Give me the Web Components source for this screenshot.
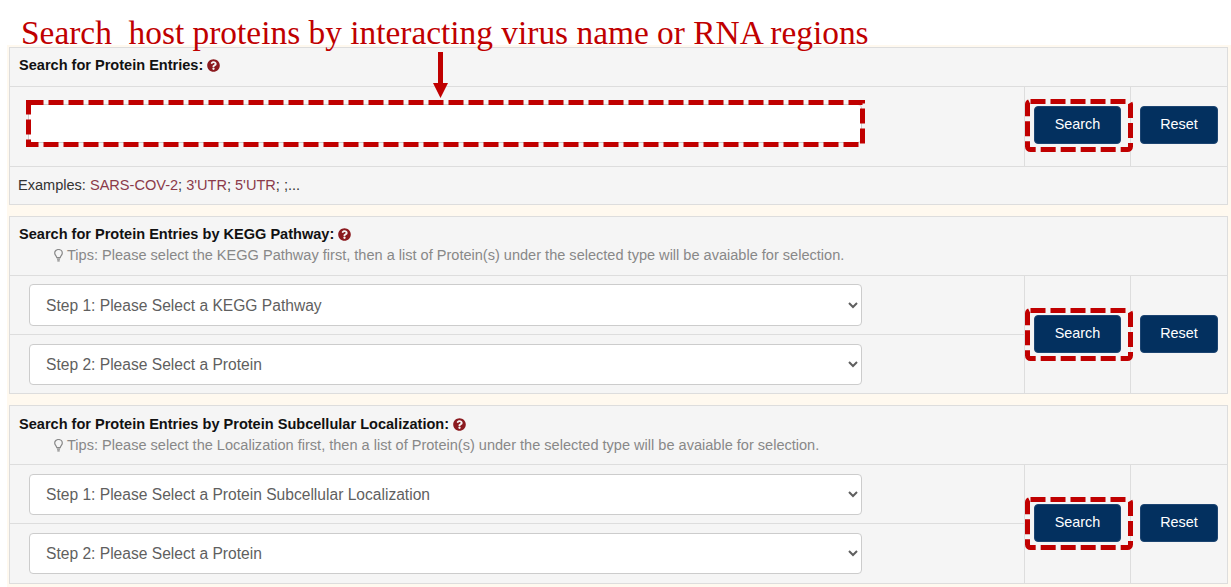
<!DOCTYPE html>
<html>
<head>
<meta charset="utf-8">
<title>Search</title>
<style>
  html, body { margin: 0; padding: 0; background: #fff; }
  body { font-family: "Liberation Sans", Arial, sans-serif; font-size: 14.560px; color: #333; overflow: hidden; height: 587px; }
  main { display: flex; flex-direction: column; gap: 11px; margin-left: 7px; padding: 2px 3px 3px 2px; background: #fff9ef; }
  a { color: #8b3a4a; text-decoration: none; }
</style>
</head>
<body>
<page-title>Search&nbsp; host proteins by interacting virus name or RNA regions</page-title>
<main>
  <search-panel compact>
    <panel-heading slot="heading">Search for Protein Entries:</panel-heading>
    <text-field slot="fields"></text-field>
    <div slot="footer">Examples: <a href="#">SARS-COV-2</a>; <a href="#">3'UTR</a>; <a href="#">5'UTR</a>; ;...</div>
  </search-panel>
  <search-panel>
    <panel-heading slot="heading" tips="Tips: Please select the KEGG Pathway first, then a list of Protein(s) under the selected type will be avaiable for selection.">Search for Protein Entries by KEGG Pathway:</panel-heading>
    <step-select slot="fields" tall label="Step 1: Please Select a KEGG Pathway"></step-select>
    <step-select slot="fields" label="Step 2: Please Select a Protein"></step-select>
  </search-panel>
  <search-panel low>
    <panel-heading slot="heading" tips="Tips: Please select the Localization first, then a list of Protein(s) under the selected type will be avaiable for selection.">Search for Protein Entries by Protein Subcellular Localization:</panel-heading>
    <step-select slot="fields" label="Step 1: Please Select a Protein Subcellular Localization"></step-select>
    <step-select slot="fields" wide label="Step 2: Please Select a Protein"></step-select>
  </search-panel>
</main>

<script>
(function () {
  const RED = '#c00000'

  class PageTitle extends HTMLElement {
    constructor() {
      super()
      this.attachShadow({mode: 'open'}).innerHTML = `
        <style>
          :host {
            display: block;
            position: relative;
            height: 45px;
            box-sizing: border-box;
            padding: 13px 0 0 21px;
            font: 33.400px/40px "Liberation Serif", "Times New Roman", serif;
            color: ${RED};
            white-space: nowrap;
          }
          svg { position: absolute; left: 432px; top: 52px; z-index: 5; }
        </style>
        <slot></slot>
        <svg width="17" height="46" viewBox="0 0 17 46"><path d="M6 0h5v31h5L8.500 46 1 31h5z" fill="${RED}"/></svg>
      `
    }
  }

  // dashed rectangle laid over a control, offsets are relative to that control
  class DashBox extends HTMLElement {
    constructor() {
      super()
      this.attachShadow({mode: 'open'})
    }
    connectedCallback() {
      const w = +this.getAttribute('w')
      const h = +this.getAttribute('h')
      const r = this.getAttribute('r') || 0
      this.shadowRoot.innerHTML = `
        <style>
          :host { position: absolute; left: ${this.getAttribute('x')}px; top: ${this.getAttribute('y')}px; z-index: 4; pointer-events: none; line-height: 0; }
        </style>
        <svg width="${w}" height="${h}">
          <rect x="2.500" y="2.500" width="${w - 5}" height="${h - 5}" rx="${r}" fill="none" stroke="${RED}" stroke-width="5" stroke-dasharray="15 5"/>
        </svg>
      `
    }
  }

  class HelpIcon extends HTMLElement {
    constructor() {
      super()
      this.attachShadow({mode: 'open'}).innerHTML = `
        <style>
          :host { display: inline-flex; margin-left: 4px; }
        </style>
        <svg width="13" height="13" viewBox="0 0 512 512"><path fill="#8b1a1f" d="M504 256c0 136.997-111.043 248-248 248S8 392.997 8 256C8 119.083 119.043 8 256 8s248 111.083 248 248zM262.655 90c-54.497 0-89.255 22.957-116.549 63.758-3.536 5.286-2.353 12.415 2.715 16.258l34.699 26.31c5.205 3.947 12.621 3.008 16.665-2.122 17.864-22.658 30.113-35.797 57.303-35.797 20.429 0 45.698 13.148 45.698 32.958 0 14.976-12.363 22.667-32.534 33.976C247.128 238.528 216 254.941 216 296v4c0 6.627 5.373 12 12 12h56c6.627 0 12-5.373 12-12v-1.333c0-28.462 83.186-29.647 83.186-106.667 0-58.002-60.165-102-116.531-102zM256 338c-25.365 0-46 20.635-46 46 0 25.364 20.635 46 46 46s46-20.636 46-46c0-25.365-20.635-46-46-46z"/></svg>
      `
    }
  }

  class PanelHeading extends HTMLElement {
    constructor() {
      super()
      this.attachShadow({mode: 'open'})
    }
    connectedCallback() {
      const tips = this.getAttribute('tips')
      this.shadowRoot.innerHTML = `
        <style>
          :host { display: block; }
          .title { display: flex; align-items: center; font-weight: bold; color: #111; line-height: 20px; }
          .tips { display: flex; align-items: center; gap: 4px; margin-top: 1px; padding-left: 35px; color: #888; line-height: 20px; }
        </style>
        <div class="title"><slot></slot><help-icon></help-icon></div>
        ${tips ? `<div class="tips">
          <svg width="9" height="13" viewBox="0 0 9 13" fill="none" stroke="#888" stroke-width="1.200">
            <path d="M2.800 8.600C2.500 6.900 .7 6.200 .7 4.100a3.800 3.600 0 0 1 7.600 0C8.300 6.200 6.500 6.900 6.200 8.600z"/>
            <path d="M3 10.200h3M3.300 11.800h2.400" stroke-width="1.300"/>
          </svg>
          <span>${tips}</span></div>` : ''}
      `
    }
  }

  class ActionBtn extends HTMLElement {
    constructor() {
      super()
      this.attachShadow({mode: 'open'})
    }
    connectedCallback() {
      this.shadowRoot.innerHTML = `
        <style>
          :host { display: block; position: relative; }
          button {
            display: block;
            width: 100%;
            height: 38px;
            padding: 0 0 2px;
            border: 1px solid #1c4471;
            border-radius: 4px;
            background: #03305f;
            color: #fff;
            font: 14.400px "Liberation Sans", Arial, sans-serif;
          }
        </style>
        <button type="button"><slot></slot></button>
        ${this.hasAttribute('dashed') ? '<dash-box x="-9" y="-7" w="108" h="53" r="3"></dash-box>' : ''}
      `
    }
  }

  class TextField extends HTMLElement {
    constructor() {
      super()
      this.attachShadow({mode: 'open'}).innerHTML = `
        <style>
          :host { display: flex; align-items: center; height: 79px; padding: 0 162px 6px 18px; box-sizing: border-box; }
          .wrap { position: relative; flex: 1; }
          input { display: block; width: 100%; height: 39px; box-sizing: border-box; border: 1px solid #ccc; border-radius: 4px; background: #fff; }
        </style>
        <div class="wrap">
          <input type="text">
          <dash-box x="-2" y="-4" w="839" h="47"></dash-box>
        </div>
      `
    }
  }

  class StepSelect extends HTMLElement {
    constructor() {
      super()
      this.attachShadow({mode: 'open'})
    }
    connectedCallback() {
      this.shadowRoot.innerHTML = `
        <style>
          :host { display: flex; align-items: center; height: 58px; padding: 0 162px 0 19px; box-sizing: border-box; }
          :host(:not(:last-child)) { height: 59px; border-bottom: 1px solid #ddd; }
          :host([wide]) { height: 59px; }
          select {
            flex: 1;
            min-width: 0;
            height: 41px;
            padding: 0 12px;
            border: 1px solid #ccc;
            border-radius: 4px;
            background-color: #fff;
            color: #5f5f5f;
            font: 15.600px "Liberation Sans", Arial, sans-serif;
          }
          :host([tall]) select { height: 42px; }
        </style>
        <select><option>${this.getAttribute('label')}</option></select>
      `
    }
  }

  class SearchPanel extends HTMLElement {
    constructor() {
      super()
      this.attachShadow({mode: 'open'}).innerHTML = `
        <style>
          :host { display: block; border: 1px solid #ddd; background: #f5f5f5; }
          .heading { box-sizing: border-box; height: 59px; padding: 7px 9px 0; border-bottom: 1px solid #ddd; }
          :host([compact]) .heading { height: 39px; padding-top: 7px; }
          :host([low]) .heading { padding-top: 8px; }
          .body { display: grid; grid-template-columns: 1fr 106px 97px; }
          .fields { min-width: 0; }
          .cell { display: flex; flex-direction: column; justify-content: center; padding: 0 9px 1px; border-left: 1px solid #ddd; }
          :host([low]) .cell { padding-bottom: 2px; }
          :host([compact]) .cell { padding-bottom: 3px; }
          .footer { display: none; height: 38px; box-sizing: border-box; padding: 8px 8px 0; border-top: 1px solid #ddd; line-height: 20px; }
          :host([compact]) .footer { display: block; }
        </style>
        <div class="heading"><slot name="heading"></slot></div>
        <div class="body">
          <div class="fields"><slot name="fields"></slot></div>
          <div class="cell"><action-btn dashed>Search</action-btn></div>
          <div class="cell"><action-btn>Reset</action-btn></div>
        </div>
        <div class="footer"><slot name="footer"></slot></div>
      `
    }
  }

  window.customElements.define('page-title', PageTitle)
  window.customElements.define('dash-box', DashBox)
  window.customElements.define('help-icon', HelpIcon)
  window.customElements.define('panel-heading', PanelHeading)
  window.customElements.define('action-btn', ActionBtn)
  window.customElements.define('text-field', TextField)
  window.customElements.define('step-select', StepSelect)
  window.customElements.define('search-panel', SearchPanel)
})()
</script>
</body>
</html>
